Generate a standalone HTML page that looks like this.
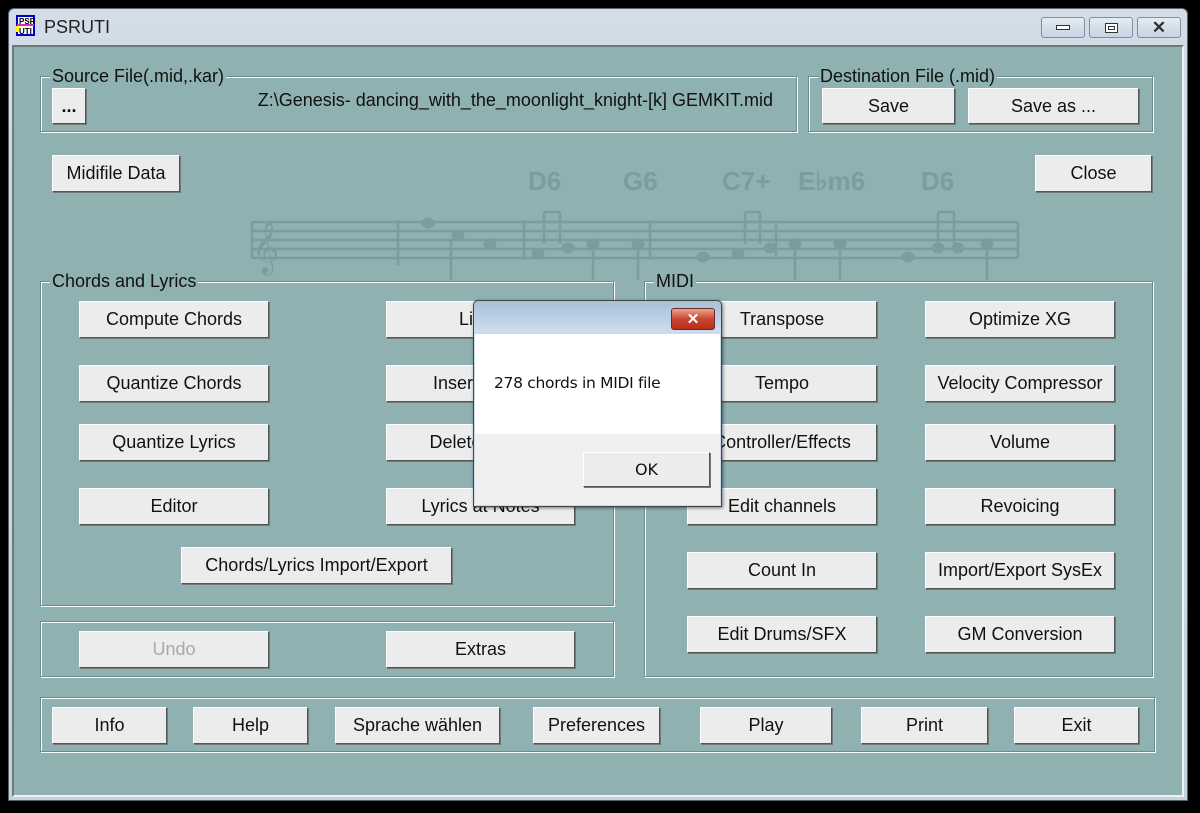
<!DOCTYPE html>
<html><head><meta charset="utf-8">
<style>
*{box-sizing:border-box;margin:0;padding:0}
body{width:1200px;height:813px;background:#000;position:relative;overflow:hidden;font-family:"Liberation Sans",Arial,sans-serif}
.a{position:absolute}
.win{left:8px;top:8px;width:1180px;height:793px;background:linear-gradient(#d3dde8,#c4d2e0);border:1px solid #5a6470;border-radius:6px 6px 0 0}
.client{left:12px;top:45px;width:1172px;height:752px;background:#8fb1b1;border:2px solid #6e7a7a;border-right-color:#f0f0f0;border-bottom-color:#f0f0f0}
.grp{position:absolute;border:1px solid #6e8a8a;box-shadow:1px 1px 0 #fff, inset 1px 1px 0 #fff}
.lbl{position:absolute;background:#8fb1b1;font-size:18px;color:#111;padding:0 2px;line-height:18px}
.btn{position:absolute;background:#ececec;border:1px solid;border-color:#fff #555 #555 #fff;box-shadow:1px 1px 0 #777;font-size:18px;color:#111;display:flex;align-items:center;justify-content:center;white-space:nowrap;overflow:hidden}
.dis{color:#a8a8a8}
.tb{position:absolute;top:8px;width:44px;height:21px;border:1px solid #7f8ea0;border-radius:3px;background:linear-gradient(#e4ebf3,#c8d4e2);display:flex;align-items:center;justify-content:center;font-size:13px;color:#333}
</style></head><body>
<div class="a win">
  <div class="a" style="left:5px;top:6px;width:22px;height:22px">
    <svg width="22" height="22"><rect x="3" y="1" width="17" height="19" fill="#fff" stroke="#00c" stroke-width="2"/><rect x="3" y="9" width="17" height="2" fill="#e0309a"/><rect x="2" y="11" width="3" height="6" fill="#ff0"/><text x="5" y="9" font-size="8" font-weight="bold" font-family="Liberation Sans">PSR</text><text x="5" y="19" font-size="8" font-weight="bold" font-family="Liberation Sans">UTI</text></svg>
  </div>
  <div class="a" style="left:35px;top:8px;font-size:18px;color:#222">PSRUTI</div>
  <div class="tb" style="left:1032px"><div style="width:14px;height:5px;border:1px solid #333;background:#fff"></div></div>
  <div class="tb" style="left:1080px"><div style="width:13px;height:10px;border:1px solid #333;background:#fff"><div style="margin:2px;width:7px;height:4px;border:1px solid #333"></div></div></div>
  <div class="tb" style="left:1128px;font-weight:bold;font-size:17px">✕</div>
</div>
<div class="a client"></div>

<!-- music watermark -->
<svg class="a" style="left:248px;top:140px" width="785" height="150">
 <g fill="#7d9c9c" stroke="#7d9c9c" font-family="Liberation Sans" font-weight="bold" font-size="26">
  <text x="280" y="50" stroke="none">D6</text><text x="375" y="50" stroke="none">G6</text><text x="474" y="50" stroke="none">C7+</text><text x="550" y="50" stroke="none">E♭m6</text><text x="673" y="50" stroke="none">D6</text>
  <g stroke-width="2.5"><line x1="4" y1="82" x2="770" y2="82"/><line x1="4" y1="91" x2="770" y2="91"/><line x1="4" y1="100" x2="770" y2="100"/><line x1="4" y1="109" x2="770" y2="109"/><line x1="4" y1="118" x2="770" y2="118"/>
  <line x1="4" y1="82" x2="4" y2="118"/><line x1="770" y1="82" x2="770" y2="118"/><line x1="276" y1="82" x2="276" y2="118"/><line x1="402" y1="82" x2="402" y2="118"/><line x1="528" y1="82" x2="528" y2="118"/>
  <line x1="296" y1="72" x2="296" y2="104"/><line x1="312" y1="72" x2="312" y2="104"/><line x1="296" y1="72" x2="312" y2="72"/>
  <line x1="497" y1="72" x2="497" y2="104"/><line x1="512" y1="72" x2="512" y2="104"/><line x1="497" y1="72" x2="512" y2="72"/>
  <line x1="690" y1="72" x2="690" y2="104"/><line x1="706" y1="72" x2="706" y2="104"/><line x1="690" y1="72" x2="706" y2="72"/>
  <line x1="150" y1="80" x2="150" y2="125"/><line x1="203" y1="100" x2="203" y2="140"/><line x1="345" y1="100" x2="345" y2="140"/><line x1="390" y1="100" x2="390" y2="140"/><line x1="547" y1="100" x2="547" y2="140"/><line x1="592" y1="100" x2="592" y2="140"/><line x1="739" y1="100" x2="739" y2="140"/></g>
  <text x="4" y="122" stroke="none" font-size="46" font-weight="normal">𝄞</text>
  <ellipse cx="180" cy="83" rx="6" ry="5"/><ellipse cx="210" cy="95" rx="6" ry="5"/><ellipse cx="242" cy="104" rx="6" ry="5"/><ellipse cx="290" cy="114" rx="6" ry="5"/><ellipse cx="320" cy="108" rx="6" ry="5"/><ellipse cx="345" cy="104" rx="6" ry="5"/><ellipse cx="390" cy="104" rx="6" ry="5"/><ellipse cx="455" cy="117" rx="6" ry="5"/><ellipse cx="490" cy="114" rx="6" ry="5"/><ellipse cx="522" cy="108" rx="6" ry="5"/><ellipse cx="547" cy="104" rx="6" ry="5"/><ellipse cx="592" cy="104" rx="6" ry="5"/><ellipse cx="660" cy="117" rx="6" ry="5"/><ellipse cx="690" cy="108" rx="6" ry="5"/><ellipse cx="710" cy="108" rx="6" ry="5"/><ellipse cx="739" cy="104" rx="6" ry="5"/>
 </g>
</svg>

<!-- Source file -->
<div class="grp" style="left:40px;top:76px;width:757px;height:56px"></div>
<div class="lbl" style="left:50px;top:67px">Source File(.mid,.kar)</div>
<div class="btn" style="left:52px;top:88px;width:34px;height:36px;font-weight:bold">...</div>
<div class="a" style="left:200px;width:573px;top:90px;text-align:right;font-size:18px;color:#111">Z:\Genesis- dancing_with_the_moonlight_knight-[k] GEMKIT.mid</div>
<!-- Destination -->
<div class="grp" style="left:808px;top:76px;width:345px;height:56px"></div>
<div class="lbl" style="left:818px;top:67px">Destination File (.mid)</div>
<div class="btn" style="left:822px;top:88px;width:133px;height:36px">Save</div>
<div class="btn" style="left:968px;top:88px;width:171px;height:36px">Save as ...</div>

<div class="btn" style="left:52px;top:155px;width:128px;height:37px">Midifile Data</div>
<div class="btn" style="left:1035px;top:155px;width:117px;height:37px">Close</div>

<!-- Chords and lyrics -->
<div class="grp" style="left:40px;top:281px;width:574px;height:325px"></div>
<div class="lbl" style="left:50px;top:272px">Chords and Lyrics</div>
<div class="btn" style="left:79px;top:301px;width:190px;height:37px">Compute Chords</div>
<div class="btn" style="left:79px;top:365px;width:190px;height:37px">Quantize Chords</div>
<div class="btn" style="left:79px;top:424px;width:190px;height:37px">Quantize Lyrics</div>
<div class="btn" style="left:79px;top:488px;width:190px;height:37px">Editor</div>
<div class="btn" style="left:386px;top:301px;width:189px;height:37px">Lines</div>
<div class="btn" style="left:386px;top:365px;width:189px;height:37px">Insert Rows</div>
<div class="btn" style="left:386px;top:424px;width:189px;height:37px">Delete Rows</div>
<div class="btn" style="left:386px;top:488px;width:189px;height:37px">Lyrics at Notes</div>
<div class="btn" style="left:181px;top:547px;width:271px;height:37px">Chords/Lyrics Import/Export</div>

<div class="grp" style="left:40px;top:621px;width:574px;height:56px"></div>
<div class="btn dis" style="left:79px;top:631px;width:190px;height:37px">Undo</div>
<div class="btn" style="left:386px;top:631px;width:189px;height:37px">Extras</div>

<!-- MIDI -->
<div class="grp" style="left:644px;top:281px;width:509px;height:396px"></div>
<div class="lbl" style="left:654px;top:272px">MIDI</div>
<div class="btn" style="left:687px;top:301px;width:190px;height:37px">Transpose</div>
<div class="btn" style="left:687px;top:365px;width:190px;height:37px">Tempo</div>
<div class="btn" style="left:687px;top:424px;width:190px;height:37px">Controller/Effects</div>
<div class="btn" style="left:687px;top:488px;width:190px;height:37px">Edit channels</div>
<div class="btn" style="left:687px;top:552px;width:190px;height:37px">Count In</div>
<div class="btn" style="left:687px;top:616px;width:190px;height:37px">Edit Drums/SFX</div>
<div class="btn" style="left:925px;top:301px;width:190px;height:37px">Optimize XG</div>
<div class="btn" style="left:925px;top:365px;width:190px;height:37px">Velocity Compressor</div>
<div class="btn" style="left:925px;top:424px;width:190px;height:37px">Volume</div>
<div class="btn" style="left:925px;top:488px;width:190px;height:37px">Revoicing</div>
<div class="btn" style="left:925px;top:552px;width:190px;height:37px">Import/Export SysEx</div>
<div class="btn" style="left:925px;top:616px;width:190px;height:37px">GM Conversion</div>

<!-- bottom -->
<div class="grp" style="left:40px;top:697px;width:1115px;height:55px"></div>
<div class="btn" style="left:52px;top:707px;width:115px;height:37px">Info</div>
<div class="btn" style="left:193px;top:707px;width:115px;height:37px">Help</div>
<div class="btn" style="left:335px;top:707px;width:165px;height:37px">Sprache wählen</div>
<div class="btn" style="left:533px;top:707px;width:127px;height:37px">Preferences</div>
<div class="btn" style="left:700px;top:707px;width:132px;height:37px">Play</div>
<div class="btn" style="left:861px;top:707px;width:127px;height:37px">Print</div>
<div class="btn" style="left:1014px;top:707px;width:125px;height:37px">Exit</div>

<!-- dialog -->
<div class="a" style="left:473px;top:300px;width:249px;height:207px;border:1px solid #444;border-radius:5px 5px 0 0;background:linear-gradient(#a8bfd8,#cddcec 30px);box-shadow:1px 1px 3px rgba(0,0,0,.5)">
  <div class="a" style="left:197px;top:7px;width:44px;height:22px;border:1px solid #6b2a20;border-radius:3px;background:linear-gradient(#e9a593,#c9452e 50%,#b52f1c);color:#fff;font-weight:bold;font-size:15px;display:flex;align-items:center;justify-content:center">✕</div>
  <div class="a" style="left:1px;top:33px;width:245px;height:100px;background:#fff"></div>
  <div class="a" style="left:1px;top:133px;width:245px;height:71px;background:#f0f0f0"></div>
  <div class="a" style="left:20px;top:73px;font-family:'DejaVu Sans','Liberation Sans',sans-serif;font-size:15.5px;letter-spacing:-0.3px;color:#111">278 chords in MIDI file</div>
  <div class="btn" style="left:109px;top:151px;width:127px;height:35px;font-family:'DejaVu Sans',sans-serif;font-size:16px;border-color:#fff #555 #555 #fff;background:#ececec">OK</div>
</div>
</body></html>
